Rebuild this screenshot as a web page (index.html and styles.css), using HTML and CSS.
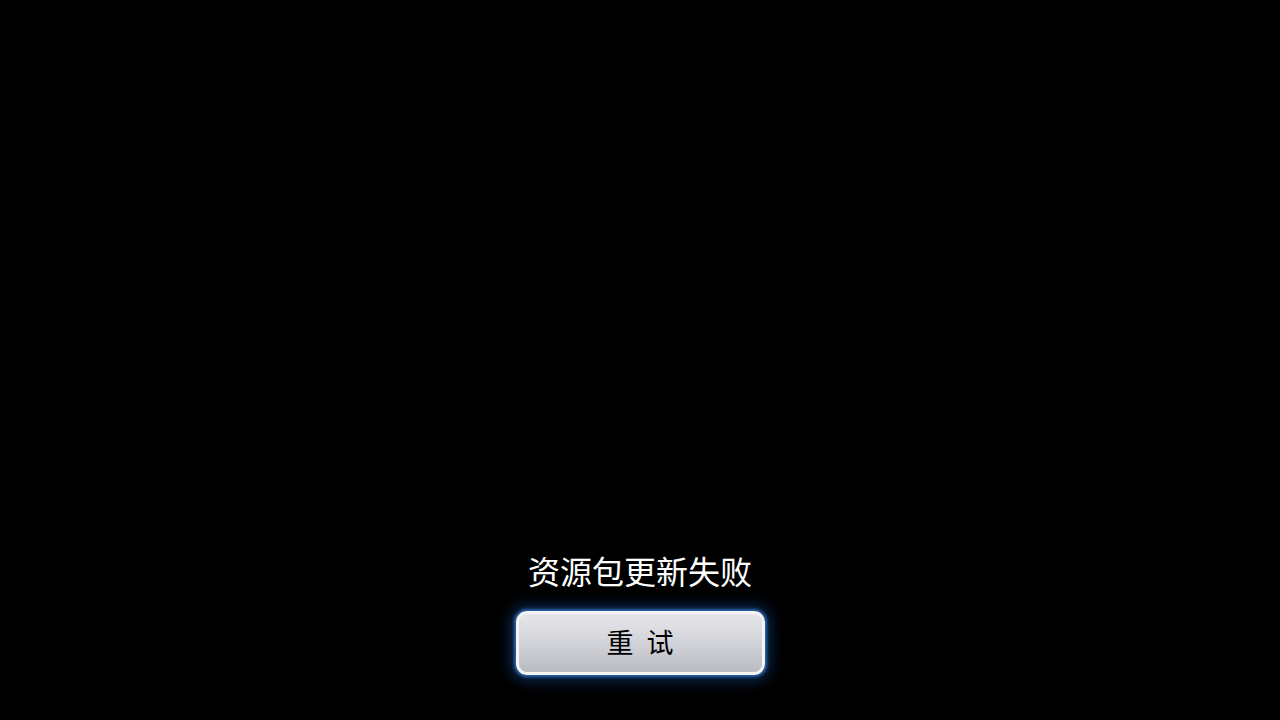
FILE: index.html
```html
<!DOCTYPE html>
<html lang="zh-CN">
<head>
<meta charset="utf-8">
<title>资源包更新失败</title>
<link rel="stylesheet" href="styles.css">
</head>
<body>
<main class="screen">
  <div class="panel">
    <p class="message">资源包更新失败</p>
    <button class="retry" type="button">重试</button>
  </div>
</main>
</body>
</html>
```

FILE: styles.css
```css
html, body {
  margin: 0;
  padding: 0;
  background: #000;
}
.screen {
  width: 1280px;
  height: 720px;
  display: flex;
  flex-direction: column;
  justify-content: flex-end;
  align-items: center;
  font-family: "Noto Sans CJK SC", "Noto Sans", sans-serif;
}
.panel {
  display: flex;
  flex-direction: column;
  align-items: center;
  padding-bottom: 45px;
}
.message {
  margin: 0 0 22px 0;
  color: #fff;
  font-size: 32px;
  line-height: 38px;
  height: 38px;
}
.retry {
  box-sizing: border-box;
  width: 249px;
  height: 64px;
  border: 3px solid #f4f4f6;
  border-radius: 11px;
  background: linear-gradient(to bottom, #e6e6ea 0%, #d2d3d8 50%, #b9bbc3 100%);
  box-shadow: 0 0 3px 2px rgba(50, 120, 200, 0.8), 0 0 14px 6px rgba(20, 70, 140, 0.55);
  color: #000;
  font-family: "Noto Sans CJK SC", "Noto Sans", sans-serif;
  font-size: 27px;
  letter-spacing: 13px;
  text-indent: 13px;
  line-height: 1;
  padding: 0 0 3px 0;
  display: flex;
  align-items: center;
  justify-content: center;
}
```
